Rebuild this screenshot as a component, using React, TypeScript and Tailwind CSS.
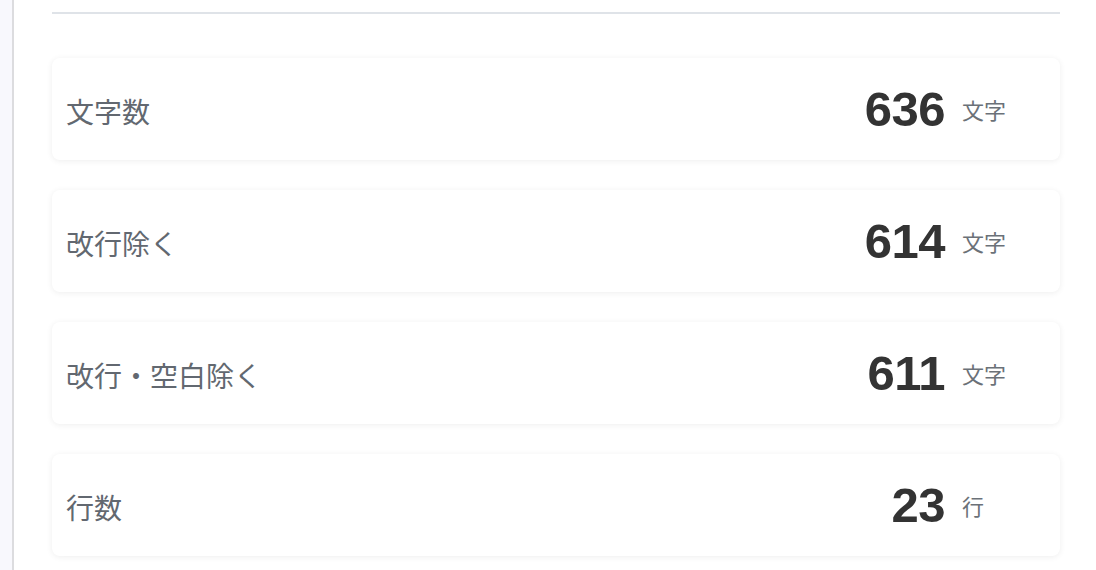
import React from 'react';

interface StatRowProps {
  label: string;
  value: number;
  unit: string;
}

const stats: StatRowProps[] = [
  { label: '文字数', value: 636, unit: '文字' },
  { label: '改行除く', value: 614, unit: '文字' },
  { label: '改行・空白除く', value: 611, unit: '文字' },
  { label: '行数', value: 23, unit: '行' },
];

const StatRow: React.FC<StatRowProps> = ({ label, value, unit }) => (
  <div className="h-[102px] bg-white rounded-lg shadow-[0_1px_6px_rgba(0,0,0,0.07)] flex items-center pl-[14px] pr-[38px]">
    <span className="flex-1 text-[28px] text-[#626870] leading-none pt-[3px]">{label}</span>
    <span className="text-[49px] font-bold text-[#333333] leading-none tracking-[-0.5px] font-['Liberation_Sans',Arial,sans-serif]">
      {value}
    </span>
    <span className="w-[60px] ml-[17px] text-[22px] text-[#6b7178] leading-none">{unit}</span>
  </div>
);

export default function App() {
  return (
    <div className="w-[1096px] h-[570px] overflow-hidden flex bg-white font-['Noto_Sans_CJK_JP','Noto_Sans',sans-serif]">
      {/* left side panel edge */}
      <div className="w-[14px] bg-[#f8f8fd] border-r-2 border-[#dcdcdf] shrink-0" />

      <main className="flex-1 pl-[38px] pr-[36px]">
        <div className="h-[14px] border-b-2 border-[#dfe3e8]" />
        <div className="pt-[44px] flex flex-col gap-[30px]">
          {stats.map((s) => (
            <StatRow key={s.label} {...s} />
          ))}
        </div>
      </main>
    </div>
  );
}
